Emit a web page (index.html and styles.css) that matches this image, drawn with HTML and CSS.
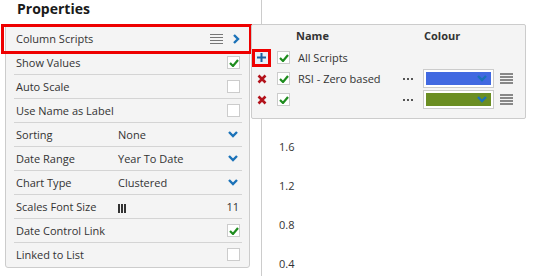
FILE: index.html
```html
<!DOCTYPE html>
<html lang="en">
  <head>
    <meta charset="UTF-8" />
    <title>Properties</title>
    <link rel="stylesheet" href="styles.css">
  </head>
  <body>
    <div class="page">
      <div class="props">
        <h1>Properties</h1>
        <div class="panel">
          <div class="row marked">
            <span class="label">Column Scripts</span>
            <span class="icons">
              <span class="menu"><i></i><i></i><i></i><i></i></span>
              <svg class="chev-right" width="7" height="10" viewBox="0 0 7 10"><path d="M1 1 L5 5 L1 9" fill="none" stroke="#1b72b8" stroke-width="2.4"/></svg>
            </span>
          </div>
          <div class="row">
            <span class="label">Show Values</span>
            <span class="check on"><svg width="10" height="8" viewBox="0 0 10 8"><path d="M1 4 L4 7 L9 1" fill="none" stroke="#1e8c1e" stroke-width="2.2"/></svg></span>
          </div>
          <div class="row">
            <span class="label">Auto Scale</span>
            <span class="check"></span>
          </div>
          <div class="row">
            <span class="label">Use Name as Label</span>
            <span class="check"></span>
          </div>
          <div class="row">
            <span class="label">Sorting</span>
            <span class="value">None</span>
            <svg class="chev" width="10" height="7" viewBox="0 0 10 7"><path d="M1 1 L5 5 L9 1" fill="none" stroke="#1b72b8" stroke-width="2.4"/></svg>
          </div>
          <div class="row">
            <span class="label">Date Range</span>
            <span class="value">Year To Date</span>
            <svg class="chev" width="10" height="7" viewBox="0 0 10 7"><path d="M1 1 L5 5 L9 1" fill="none" stroke="#1b72b8" stroke-width="2.4"/></svg>
          </div>
          <div class="row">
            <span class="label">Chart Type</span>
            <span class="value">Clustered</span>
            <svg class="chev" width="10" height="7" viewBox="0 0 10 7"><path d="M1 1 L5 5 L9 1" fill="none" stroke="#1b72b8" stroke-width="2.4"/></svg>
          </div>
          <div class="row">
            <span class="label">Scales Font Size</span>
            <span class="value"><span class="bars"><i></i><i></i><i></i></span></span>
            <span class="num">11</span>
          </div>
          <div class="row">
            <span class="label">Date Control Link</span>
            <span class="check on"><svg width="10" height="8" viewBox="0 0 10 8"><path d="M1 4 L4 7 L9 1" fill="none" stroke="#1e8c1e" stroke-width="2.2"/></svg></span>
          </div>
          <div class="row last">
            <span class="label">Linked to List</span>
            <span class="check"></span>
          </div>
        </div>
      </div>

      <div class="chart">
        <div class="axis">
          <span>1.6</span>
          <span>1.2</span>
          <span>0.8</span>
          <span>0.4</span>
        </div>
      </div>

      <div class="scripts">
        <div class="srow head">
          <span class="c-act"></span>
          <span class="c-chk"></span>
          <span class="c-name">Name</span>
          <span class="c-dots"></span>
          <span class="c-col">Colour</span>
        </div>
        <div class="srow">
          <span class="c-act"><span class="plus"><svg width="9" height="9" viewBox="0 0 9 9"><path d="M4.5 0 V9 M0 4.5 H9" stroke="#1b5f9e" stroke-width="2"/></svg></span></span>
          <span class="c-chk"><span class="check on"><svg width="10" height="8" viewBox="0 0 10 8"><path d="M1 4 L4 7 L9 1" fill="none" stroke="#1e8c1e" stroke-width="2.2"/></svg></span></span>
          <span class="c-name">All Scripts</span>
        </div>
        <div class="srow">
          <span class="c-act"><svg width="10" height="10" viewBox="0 0 10 10"><path d="M1.5 1.5 L8.5 8.5 M8.5 1.5 L1.5 8.5" stroke="#b3121b" stroke-width="2.6"/></svg></span>
          <span class="c-chk"><span class="check on"><svg width="10" height="8" viewBox="0 0 10 8"><path d="M1 4 L4 7 L9 1" fill="none" stroke="#1e8c1e" stroke-width="2.2"/></svg></span></span>
          <span class="c-name">RSI - Zero based</span>
          <span class="c-dots"><i></i><i></i><i></i></span>
          <span class="c-col"><span class="swatch" style="background: #4169e1"><svg width="10" height="7" viewBox="0 0 10 7"><path d="M1 1 L5 5 L9 1" fill="none" stroke="#1b72b8" stroke-width="2.4"/></svg></span></span>
          <span class="menu big"><i></i><i></i><i></i><i></i></span>
        </div>
        <div class="srow">
          <span class="c-act"><svg width="10" height="10" viewBox="0 0 10 10"><path d="M1.5 1.5 L8.5 8.5 M8.5 1.5 L1.5 8.5" stroke="#b3121b" stroke-width="2.6"/></svg></span>
          <span class="c-chk"><span class="check on"><svg width="10" height="8" viewBox="0 0 10 8"><path d="M1 4 L4 7 L9 1" fill="none" stroke="#1e8c1e" stroke-width="2.2"/></svg></span></span>
          <span class="c-name"></span>
          <span class="c-dots"><i></i><i></i><i></i></span>
          <span class="c-col"><span class="swatch" style="background: #6b8e23"><svg width="10" height="7" viewBox="0 0 10 7"><path d="M1 1 L5 5 L9 1" fill="none" stroke="#1b72b8" stroke-width="2.4"/></svg></span></span>
          <span class="menu big"><i></i><i></i><i></i><i></i></span>
        </div>
      </div>
    </div>
  </body>
</html>
```

FILE: styles.css
```css
body {
  margin: 0;
  font-family: "Open Sans", Arial, sans-serif;
  font-size: 11px;
  color: #333;
  background: white;
}
.page {
  position: relative;
  display: flex;
  height: 276px;
  overflow: hidden;
}
.props {
  width: 250px;
  flex: none;
}
h1 {
  margin: 0;
  padding-left: 17px;
  height: 24px;
  font-size: 14px;
  font-weight: bold;
  line-height: 17px;
  color: #1a1a1a;
}
.panel {
  margin-left: 5px;
  width: 228px;
  padding: 2px 7px 1px 8px;
  background: #f4f4f4;
  border: 1px solid #ccc;
  border-radius: 3px;
}
.row {
  display: flex;
  align-items: center;
  height: 23px;
  padding: 0 2px;
  border-bottom: 1px solid #d4d4d4;
}
.row.last {
  border-bottom: none;
}
.row.marked {
  outline: 3px solid #ee0000;
  margin: 0 -7px 0 -10px;
  padding: 0 9px 0 12px;
  border-bottom-color: transparent;
}
.label {
  width: 102px;
  flex: none;
}
.value {
  flex: 1;
}
.row .check,
.row .num {
  margin-left: auto;
}
.num {
  padding-right: 1px;
}
.icons {
  margin-left: auto;
  display: flex;
  align-items: center;
  gap: 10px;
}
.chev {
  margin-right: 2px;
}
.check {
  display: flex;
  align-items: center;
  justify-content: center;
  width: 11px;
  height: 11px;
  background: white;
  border: 1px solid #ccc;
}
.menu {
  display: flex;
  flex-direction: column;
  gap: 2px;
  width: 13px;
}
.menu i {
  height: 1px;
  background: #777;
}
.menu.big {
  margin-left: 7px;
  gap: 1px;
}
.menu.big i {
  height: 2px;
  background: #888;
}
.bars {
  display: inline-flex;
  gap: 1px;
  vertical-align: middle;
}
.bars i {
  width: 2px;
  height: 9px;
  background: #333;
}
.chart {
  margin-left: 11px;
  flex: 1;
  border-left: 1px solid #ccc;
}
.axis {
  display: flex;
  flex-direction: column;
  gap: 24px;
  padding: 139px 0 0 17px;
  line-height: 15px;
}
.scripts {
  position: absolute;
  left: 251px;
  top: 24px;
  width: 273px;
  height: 93px;
  background: #f4f4f4;
  border: 1px solid #ccc;
  border-radius: 2px;
}
.srow {
  display: flex;
  align-items: center;
  height: 21px;
}
.srow.head {
  height: 20px;
  font-weight: bold;
  color: #333;
}
.srow.head .c-name {
  margin-left: 7px;
}
.srow.head .c-col {
  margin-left: 2px;
}
.srow:nth-child(2) {
  margin-top: 2px;
}
.c-act {
  width: 19px;
  display: flex;
  justify-content: center;
  align-items: center;
}
.c-chk {
  width: 12px;
  margin-left: 6px;
}
.c-name {
  width: 105px;
  margin-left: 9px;
}
.c-dots {
  width: 21px;
  display: flex;
  gap: 2px;
}
.c-dots i {
  width: 2px;
  height: 2px;
  background: #555;
}
.c-col {
  width: 69px;
}
.plus {
  display: flex;
  align-items: center;
  justify-content: center;
  width: 13px;
  height: 12px;
  background: #e8eef5;
  outline: 3px solid #ee0000;
}
.swatch {
  display: flex;
  align-items: center;
  justify-content: flex-end;
  box-sizing: border-box;
  height: 17px;
  padding-right: 4px;
  border: 2px solid white;
  outline: 1px solid #ccc;
}
```
